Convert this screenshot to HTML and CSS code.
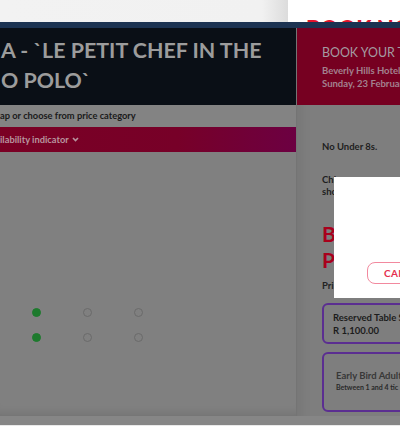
FILE: index.html
```html
<!DOCTYPE html>
<html lang="en">
<head>
<meta charset="utf-8">
<title>Book Now</title>
<link rel="stylesheet" href="styles.css">
</head>
<body>
<header class="topbar">
  <div class="top-left"></div>
  <div class="top-right"><span class="book-now">BOOK NOW</span></div>
</header>
<div class="stage">
  <div class="navy"></div>
  <div class="columns">
    <main class="left">
      <div class="title-box">
        <h1 class="title">A - `LE PETIT CHEF IN THE<br>O POLO`</h1>
      </div>
      <div class="hint">ap or choose from price category</div>
      <div class="avail">ilability indicator
        <svg class="chev" width="7" height="5" viewBox="0 0 7 5"><path d="M1 1 L3.5 3.6 L6 1" fill="none" stroke="currentColor" stroke-width="1.6"/></svg>
      </div>
      <div class="seatmap">
        <span class="seat taken"></span><span class="seat"></span><span class="seat"></span>
        <span class="seat taken"></span><span class="seat"></span><span class="seat"></span>
      </div>
    </main>
    <aside class="right">
      <div class="book-head">
        <div class="bh-title">BOOK YOUR T</div>
        <div class="bh-sub">Beverly Hills Hotel -</div>
        <div class="bh-sub">Sunday, 23 Februar</div>
      </div>
      <div class="details">
        <p class="note">No Under 8s.</p>
        <p class="note note2">Chi<br>sho</p>
        <h2 class="section">B<br>P</h2>
        <p class="pri">Pri</p>
        <div class="card">
          <div class="c-name">Reserved Table S</div>
          <div class="c-name">R 1,100.00</div>
        </div>
        <div class="card card2">
          <div class="c-name muted">Early Bird Adult</div>
          <div class="c-small">Between 1 and 4 tic</div>
        </div>
      </div>
    </aside>
  </div>
  <div class="footer-strip"></div>
  <div class="modal">
    <button class="cancel">CAN</button>
  </div>
</div>
</body>
</html>
```
FILE: styles.css
```css
* { box-sizing: border-box; }
html, body { margin: 0; padding: 0; }
body {
  width: 400px;
  height: 426px;
  overflow: hidden;
  font-family: Lato, "Open Sans", sans-serif;
  background: #ececec;
}
.topbar {
  display: flex;
  height: 22px;
  overflow: hidden;
}
.top-left {
  width: 288px;
  background: linear-gradient(90deg, #f2f2f2 0, #f1f1f1 262px, #dcdcdc 288px);
}
.top-right {
  flex: 1;
  background: #fff;
  overflow: hidden;
}
.book-now {
  display: block;
  margin: 18px 0 0 18px;
  font-size: 22px;
  font-weight: 900;
  line-height: 22px;
  color: #e3132c;
  white-space: nowrap;
}
.stage {
  position: relative;
}
.navy {
  height: 6px;
  background: #1c3352;
}
.columns {
  display: grid;
  grid-template-columns: 297px 1fr;
  height: 388px;
}
.left {
  display: flex;
  flex-direction: column;
  background: #808080;
  border-right: 1px solid #747474;
  box-shadow: inset 0 -10px 10px -8px rgba(0,0,0,0.12);
}
.title-box {
  height: 77px;
  background: #0a0f16;
  padding: 7px 0 0 1px;
  overflow: hidden;
}
.title {
  margin: 0;
  font-size: 21.4px;
  font-weight: 700;
  line-height: 30px;
  color: #9c9c9c;
  white-space: nowrap;
}
.hint {
  height: 22px;
  line-height: 22px;
  font-size: 9.3px;
  font-weight: 700;
  color: #1a1a1a;
  background: #838383;
  white-space: nowrap;
}
.avail {
  height: 25px;
  line-height: 25px;
  font-size: 9.3px;
  font-weight: 700;
  color: #b8949f;
  background: linear-gradient(90deg, #7a0024 0, #770028 60%, #6c0042 100%);
  white-space: nowrap;
}
.chev { vertical-align: 1px; margin-left: 1px; }
.seatmap {
  display: grid;
  grid-template-columns: repeat(3, 9px);
  grid-auto-rows: 9px;
  column-gap: 42px;
  row-gap: 16px;
  padding: 156px 0 0 32px;
}
.seat {
  width: 9px;
  height: 9px;
  border-radius: 50%;
  border: 1.4px solid #6a6a6a;
}
.seat.taken {
  background: #1d7a2d;
  border-color: #1d7a2d;
}
.right {
  background: #7e7e7e;
  box-shadow: inset 16px 0 10px -10px rgba(0,0,0,0.05);
  overflow: hidden;
}
.book-head {
  height: 77px;
  background: #760021;
  padding: 17px 0 0 25px;
  white-space: nowrap;
}
.bh-title {
  font-size: 12.4px;
  line-height: 16px;
  color: #a49ca2;
  margin-bottom: 3px;
}
.bh-sub {
  font-size: 9.5px;
  font-weight: 700;
  line-height: 13px;
  color: #a3808f;
}
.details {
  padding: 36px 0 0 25px;
  white-space: nowrap;
}
.note {
  margin: 0;
  font-size: 9.5px;
  font-weight: 700;
  line-height: 12px;
  color: #1e1e1e;
}
.note2 { margin-top: 21px; }
.section {
  margin: 23px 0 0;
  font-size: 21px;
  font-weight: 700;
  line-height: 26px;
  color: #a9001c;
}
.pri {
  margin: 7px 0 0;
  font-size: 9.5px;
  font-weight: 700;
  line-height: 12px;
  color: #222;
}
.card {
  width: 110px;
  margin-top: 11px;
  height: 41px;
  border: 2px solid #5b2e91;
  border-radius: 6px;
  padding: 6px 0 0 9px;
}
.card2 {
  margin-top: 8px;
  height: 60px;
  padding: 15px 0 0 12px;
}
.c-name {
  font-size: 9.5px;
  font-weight: 700;
  line-height: 13px;
  color: #1c1c1c;
}
.c-name.muted { color: #383838; }
.c-small {
  font-size: 7px;
  font-weight: 700;
  line-height: 11px;
  color: #2a2a2a;
}
.footer-strip {
  height: 10px;
  background: #868686;
  border-bottom: 1px solid #e9e9e9;
}
.modal {
  position: absolute;
  top: 155px;
  left: 334px;
  width: 66px;
  height: 121px;
  background: #fff;
  display: flex;
  align-items: flex-end;
  padding: 0 0 14px 33px;
  overflow: hidden;
}
.cancel {
  flex: none;
  width: 70px;
  height: 22px;
  padding: 0 0 0 16px;
  text-align: left;
  background: #fff;
  border: 1.5px solid #f2899e;
  border-radius: 8px;
  font-family: Lato, sans-serif;
  font-size: 10px;
  font-weight: 700;
  color: #e5304e;
  letter-spacing: 0.3px;
}
```
